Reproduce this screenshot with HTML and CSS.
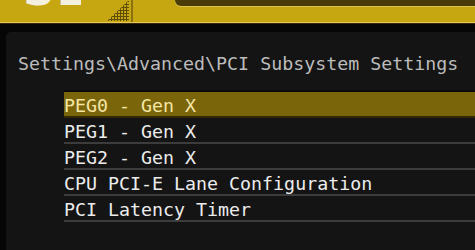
FILE: index.html
```html
<!DOCTYPE html>
<html>

<head>
    <title>PCI Subsystem Settings</title>
    <meta charset="UTF-8">
    <link rel="stylesheet" href="styles.css">
</head>

<body>
    <div class="topbar">
        <div class="brand"><span>SE</span></div>
        <div class="grip"></div>
        <div class="divider"></div>
        <div class="tabbar"></div>
    </div>

    <div class="main">
        <div class="panel">
            <div class="breadcrumb">Settings\Advanced\PCI Subsystem Settings</div>
            <ul class="menu">
                <li class="menu-item selected">PEG0 - Gen X</li>
                <li class="menu-item">PEG1 - Gen X</li>
                <li class="menu-item">PEG2 - Gen X</li>
                <li class="menu-item">CPU PCI-E Lane Configuration</li>
                <li class="menu-item">PCI Latency Timer</li>
            </ul>
        </div>
    </div>
</body>

</html>
```

FILE: styles.css
```css
body {
    font-family: "DejaVu Sans Mono", "Liberation Mono", monospace;
    width: 475px;
    height: 250px;
    margin: 0;
    padding: 0;
    overflow: hidden;
    background-color: #060606;
    color: #ececec;
}

/* Top gold strip */

.topbar {
    display: flex;
    align-items: flex-start;
    height: 22px;
    background-color: #c6a611;
    border-bottom: 1px solid #e2ca55;
    box-shadow: 0 1px 0 #3a2613;
}

.brand {
    width: 58px;
    height: 6px;
    margin-left: 23px;
    overflow: hidden;
}

.brand span {
    display: block;
    margin-top: -32px;
    font-family: "DejaVu Sans", sans-serif;
    font-weight: bold;
    font-size: 44px;
    line-height: 44px;
    letter-spacing: 2px;
    color: #f4f0e0;
}

.grip {
    width: 22px;
    height: 21px;
    margin-left: 26px;
    clip-path: polygon(100% 0, 100% 100%, 0 100%);
    background: radial-gradient(circle, #5e4d06 1px, transparent 1.4px) 0 0 / 3px 3px;
}

.divider {
    width: 2px;
    height: 22px;
    margin-left: 2px;
    background-color: #8a7210;
}

.tabbar {
    flex-grow: 1;
    height: 6px;
    margin-left: 42px;
    background-color: #4a3c08;
    border-bottom-left-radius: 6px;
    box-shadow: 0 1px 0 #dcc34c;
}

/* Settings panel */

.main {
    padding: 9px 0 0 6px;
}

.panel {
    height: 197px;
    padding: 21px 0 0 12px;
    background-color: #141414;
    border-top-left-radius: 5px;
}

.breadcrumb {
    font-size: 18.3px;
    line-height: 22px;
    color: #bcbcbc;
    white-space: nowrap;
}

.menu {
    list-style: none;
    margin: 17px 0 0 46px;
    padding: 0;
}

.menu-item {
    height: 21px;
    padding-top: 3px;
    font-size: 18.3px;
    line-height: 21px;
    white-space: nowrap;
    border-bottom: 2px solid #3c3c3c;
}

.menu-item.selected {
    background-color: #7a650a;
    color: #f5e6a6;
    border-bottom-color: #33290a;
    box-shadow: 0 -2px 0 #0b0910;
}
```
